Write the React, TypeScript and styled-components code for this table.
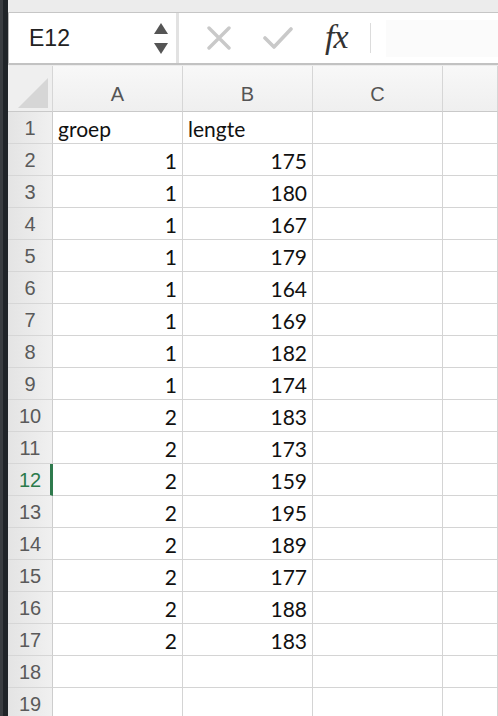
import React from "react";
import styled, { createGlobalStyle } from "styled-components";

const Global = createGlobalStyle`
  html, body { margin: 0; padding: 0; background: #ffffff; overflow: hidden; }
  body { width: 498px; height: 716px; }
`;

const Window = styled.div`
  display: flex;
  width: 498px;
  height: 716px;
  overflow: hidden;
`;

const SideStrip = styled.div`
  width: 8px;
  flex: none;
  background: linear-gradient(to right, #3a3d41 0, #3a3d41 3px, #202428 3px, #202428 8px);
`;

const Main = styled.div`
  flex: 1;
  display: flex;
  flex-direction: column;
  min-width: 0;
`;

const TopBand = styled.div`
  height: 12px;
  flex: none;
  background: #ececec;
  border-bottom: 1px solid #c6c6c6;
`;

const FormulaRow = styled.div`
  height: 50px;
  flex: none;
  display: flex;
  gap: 3px;
  background: #e2e2e2;
  border-bottom: 2px solid #c2c2c2;
  box-shadow: 0 1px 0 #ececec;
  margin-bottom: 1px;
`;

const NameBox = styled.div`
  width: 168px;
  flex: none;
  background: #ffffff;
  border-left: 1px solid #b9b9b9;
  display: flex;
  align-items: center;
  justify-content: space-between;
  padding: 0 8px 0 20px;
  box-sizing: border-box;
  font-family: "Liberation Sans", Arial, sans-serif;
  font-size: 23px;
  color: #222;
`;

const Spinner = styled.div`
  display: flex;
  flex-direction: column;
  gap: 9px;
`;

const FormulaArea = styled.div`
  flex: 1;
  background: #ffffff;
  display: flex;
  align-items: center;
  padding-left: 28px;
`;

const IconSlot = styled.div<{ $w: number }>`
  width: ${(p) => p.$w}px;
  flex: none;
  display: flex;
  align-items: center;
`;

const Fx = styled.span`
  font-family: "Liberation Serif", "Times New Roman", serif;
  font-style: italic;
  font-size: 34px;
  line-height: 1;
  color: #333;
  letter-spacing: -1px;
  width: 45px;
  flex: none;
  padding-bottom: 2px;
`;

const Divider = styled.div`
  width: 1px;
  height: 30px;
  background: #dcdcdc;
  flex: none;
`;

const FormulaInput = styled.div`
  flex: 1;
  align-self: stretch;
  margin: 7px 0 6px 15px;
  background: #fbfbfb;
`;

const Grid = styled.div`
  display: grid;
  grid-template-columns: 45px 130px 130px 130px 1fr;
  grid-template-rows: 46px;
  grid-auto-rows: 32px;
  flex: none;
`;

const ColHeader = styled.div`
  background: linear-gradient(#f8f8f8, #efefef);
  border-right: 1px solid #d6d6d6;
  border-bottom: 1px solid #c9c9c9;
  display: flex;
  align-items: center;
  justify-content: center;
  font-family: "Liberation Sans", Arial, sans-serif;
  font-size: 20px;
  color: #555;
  padding-top: 12px;
  box-sizing: border-box;
`;

const Corner = styled.div`
  background: #efefef;
  border-right: 1px solid #d6d6d6;
  border-bottom: 1px solid #c9c9c9;
  display: flex;
  align-items: flex-end;
  justify-content: flex-end;
  padding: 0 4px 3px 0;
  box-sizing: border-box;
`;

const RowHeader = styled.div<{ $selected?: boolean }>`
  background: linear-gradient(to right, #e4e4e4, #f0f0f0);
  border-right: ${(p) => (p.$selected ? "3px solid #2f7a4d" : "1px solid #cdcdcd")};
  border-bottom: 1px solid #d6d6d6;
  display: flex;
  align-items: center;
  justify-content: center;
  padding: 2px 0 0 ${(p) => (p.$selected ? "2px" : "0")};
  font-family: "Liberation Sans", Arial, sans-serif;
  font-size: 20px;
  color: ${(p) => (p.$selected ? "#2b7a4b" : "#5a5a5a")};
  box-sizing: border-box;
`;

const Cell = styled.div<{ $align?: "left" | "right" }>`
  background: #ffffff;
  border-right: 1px solid #d4d4d4;
  border-bottom: 1px solid #d4d4d4;
  display: flex;
  align-items: center;
  justify-content: ${(p) => (p.$align === "right" ? "flex-end" : "flex-start")};
  padding: 2px 5px 0 5px;
  font-family: Lato, "Open Sans", sans-serif;
  font-size: 21px;
  color: #111;
  box-sizing: border-box;
  white-space: nowrap;
  overflow: hidden;
`;

const groep = [1, 1, 1, 1, 1, 1, 1, 1, 2, 2, 2, 2, 2, 2, 2, 2];
const lengte = [175, 180, 167, 179, 164, 169, 182, 174, 183, 173, 159, 195, 189, 177, 188, 183];

type Row = { a: string; b: string; alignA: "left" | "right"; alignB: "left" | "right" };

const rows: Row[] = [
  { a: "groep", b: "lengte", alignA: "left", alignB: "left" },
  ...groep.map((g, i) => ({ a: String(g), b: String(lengte[i]), alignA: "right" as const, alignB: "right" as const })),
  { a: "", b: "", alignA: "left", alignB: "left" },
  { a: "", b: "", alignA: "left", alignB: "left" },
];

export default function App() {
  return (
    <>
      <Global />
      <Window>
        <SideStrip />
        <Main>
          <TopBand />
          <FormulaRow>
            <NameBox>
              <span>E12</span>
              <Spinner>
                <svg width="14" height="11" viewBox="0 0 14 11">
                  <path d="M7 0 L14 11 L0 11 Z" fill="#555" />
                </svg>
                <svg width="14" height="11" viewBox="0 0 14 11">
                  <path d="M0 0 L14 0 L7 11 Z" fill="#555" />
                </svg>
              </Spinner>
            </NameBox>
            <FormulaArea>
              <IconSlot $w={56}>
                <svg width="24" height="24" viewBox="0 0 24 24">
                  <path d="M2 2 L22 22 M22 2 L2 22" stroke="#c9c9c9" strokeWidth="3.4" strokeLinecap="round" />
                </svg>
              </IconSlot>
              <IconSlot $w={62}>
                <svg width="30" height="24" viewBox="0 0 30 24">
                  <path d="M2 12 L11 21 L28 3" stroke="#c9c9c9" strokeWidth="3.6" strokeLinecap="round" strokeLinejoin="round" fill="none" />
                </svg>
              </IconSlot>
              <Fx>fx</Fx>
              <Divider />
              <FormulaInput />
            </FormulaArea>
          </FormulaRow>
          <Grid>
            <Corner>
              <svg width="30" height="30" viewBox="0 0 30 30">
                <path d="M30 0 L30 30 L0 30 Z" fill="#d6d6d6" />
              </svg>
            </Corner>
            <ColHeader>A</ColHeader>
            <ColHeader>B</ColHeader>
            <ColHeader>C</ColHeader>
            <ColHeader />
            {rows.map((r, i) => (
              <React.Fragment key={i}>
                <RowHeader $selected={i + 1 === 12}>{i + 1}</RowHeader>
                <Cell $align={r.alignA}>{r.a}</Cell>
                <Cell $align={r.alignB}>{r.b}</Cell>
                <Cell />
                <Cell />
              </React.Fragment>
            ))}
          </Grid>
        </Main>
      </Window>
    </>
  );
}
